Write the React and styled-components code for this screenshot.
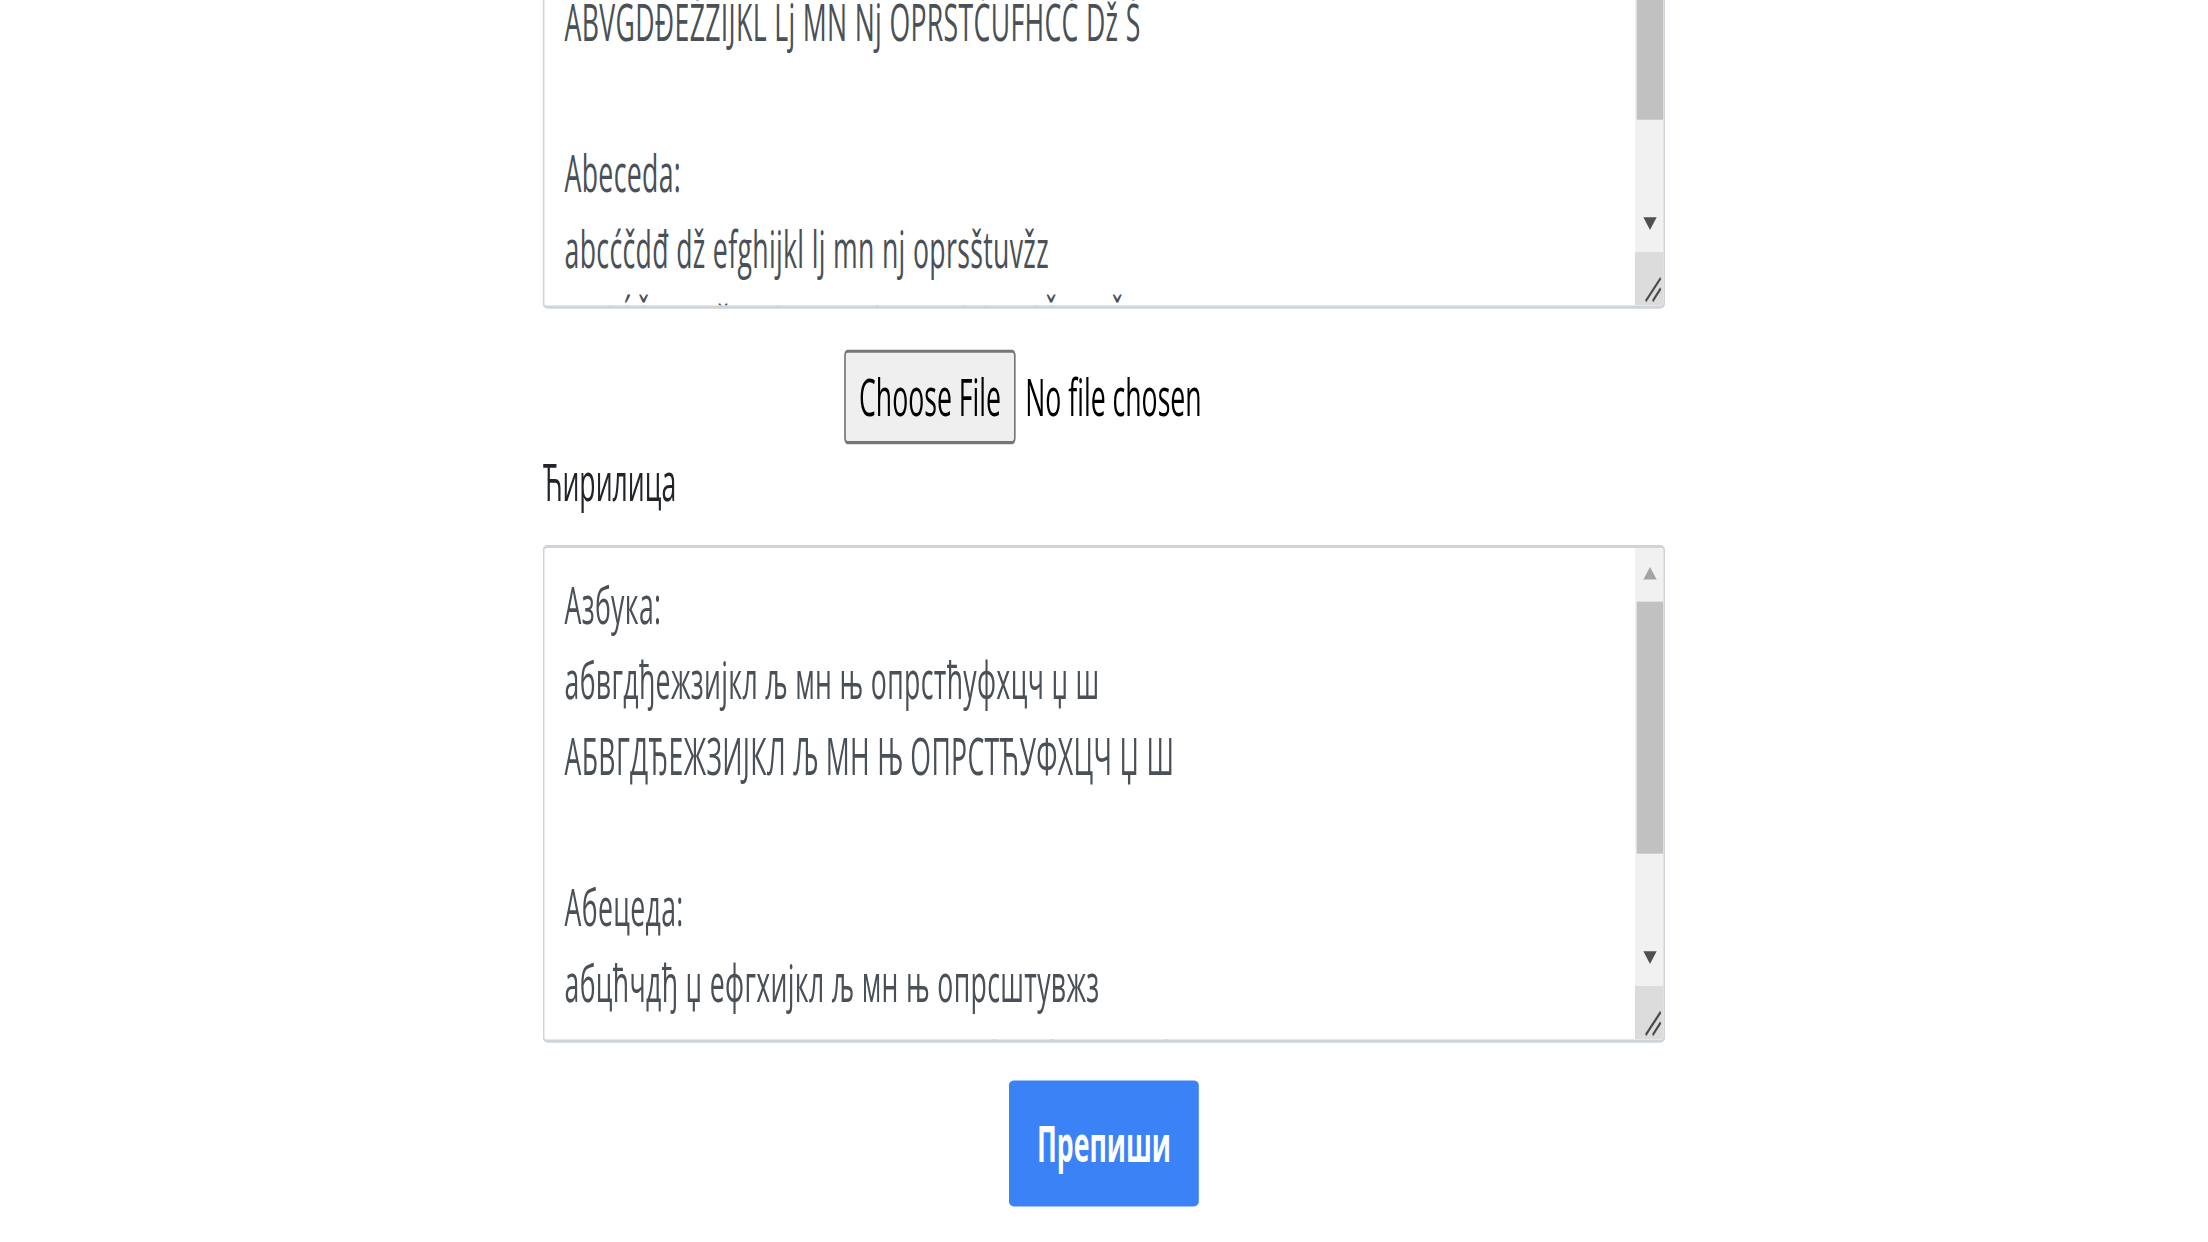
import React from 'react';
import styled, { createGlobalStyle } from 'styled-components';

const SX = 1.665;
const SY = 3.15;

const latin =
  'Azbuka:\nabvgdđežzijkl lj mn nj oprstćufhcč dž š\nABVGDĐEŽZIJKL Lj MN Nj OPRSTĆUFHCČ Dž Š\n\nAbeceda:\nabcćčdđ dž efghijkl lj mn nj oprsštuvžz\nABCĆČDĐ Dž EFGHIJKL Lj MN Nj OPRSŠTUVŽZ\n';
const cyrillic =
  'Азбука:\nабвгдђежзијкл љ мн њ опрстћуфхцч џ ш\nАБВГДЂЕЖЗИЈКЛ Љ МН Њ ОПРСТЋУФХЦЧ Џ Ш\n\nАбецеда:\nабцћчдђ џ ефгхијкл љ мн њ опрсштувжз\nАБЦЋЧДЂ Џ ЕФГХИЈКЛ Љ МН Њ ОПРСШТУВЖЗ\n';

const Global = createGlobalStyle`
  html, body { margin: 0; padding: 0; background: #fff; overflow: hidden; }
  #root { width: 2208px; height: 1242px; }
`;

const Viewport = styled.div`
  width: 2208px;
  height: 1242px;
  overflow: hidden;
  background: #fff;
`;

/* the whole page is shown stretched, as in the reference capture */
const Stage = styled.div`
  width: ${2208 / SX}px;
  height: ${1242 / SY}px;
  transform: scale(${SX}, ${SY});
  transform-origin: 0 0;
  display: flex;
  flex-direction: column;
  justify-content: flex-end;
  align-items: center;
  font-family: "Open Sans", "Noto Sans", "DejaVu Sans", sans-serif;
  font-size: 16px;
  line-height: 24px;
  color: #212529;
`;

const Form = styled.form`
  width: 674px;
  flex-shrink: 0;
  display: flex;
  flex-direction: column;
  padding-bottom: 11.1px;
  margin: 0;
`;

const Label = styled.label`
  display: block;
  margin-bottom: 8.4px;
  line-height: 24px;
  color: #212529;
`;

const Field = styled.div`
  box-sizing: border-box;
  height: 158px;
  display: flex;
  border: 1px solid #ced4da;
  border-radius: 3px / 1.5px;
  background: #fff;
  overflow: hidden;
`;

const Area = styled.textarea`
  flex: 1;
  min-width: 0;
  display: block;
  box-sizing: border-box;
  height: 100%;
  margin: 0;
  padding: 6px 12px;
  border: none;
  background: transparent;
  color: #495057;
  font: inherit;
  line-height: 24px;
  letter-spacing: 0.2px;
  resize: none;
  overflow: hidden;
  outline: none;
`;

const ScrollBar = styled.div`
  width: 17px;
  flex: none;
  display: flex;
  flex-direction: column;
  background: #f1f1f1;
`;

const ArrowButton = styled.div`
  height: 17px;
  flex: none;
  display: flex;
  align-items: center;
  justify-content: center;
`;

const Arrow = styled.span`
  width: 0;
  height: 0;
  border-left: 4px solid transparent;
  border-right: 4px solid transparent;
  ${(p) =>
    p.$up
      ? `border-bottom: 4px solid ${p.$disabled ? '#a3a3a3' : '#505050'};`
      : `border-top: 4px solid ${p.$disabled ? '#a3a3a3' : '#505050'};`}
`;

const Track = styled.div`
  flex: 1;
  display: flex;
  flex-direction: column;
  padding-left: 1px;
`;

const Thumb = styled.div`
  flex: none;
  background: #c1c1c1;
`;

const Resizer = styled.div`
  height: 17px;
  flex: none;
  background: #dcdcdc;
  display: flex;

  svg {
    width: 100%;
    height: 100%;
    display: block;
  }
`;

const FileRow = styled.div`
  margin-top: 12.7px;
  height: 30px;
  display: flex;
  justify-content: center;
`;

const FilePicker = styled.div`
  width: 312px;
  display: flex;
  align-items: center;
  gap: 5.7px;
`;

const ChooseButton = styled.button`
  box-sizing: border-box;
  width: 103px;
  height: 30px;
  padding: 0;
  background: #efefef;
  border: 1px solid #767676;
  border-radius: 2px;
  color: #000;
  font: inherit;
  white-space: nowrap;
`;

const NoFile = styled.span`
  color: #000;
  white-space: nowrap;
`;

const Submit = styled.button`
  align-self: center;
  box-sizing: border-box;
  margin-top: 12.3px;
  width: 114px;
  height: 40px;
  padding: 0;
  border: none;
  border-radius: 3px / 1.5px;
  background: #3b82f6;
  color: #fff;
  font: inherit;
  font-weight: 700;
`;

function TextField({ id, value, thumb }) {
  return (
    <Field>
      <Area id={id} rows={6} defaultValue={value} spellCheck={false} />
      <ScrollBar>
        <ArrowButton>
          <Arrow $up $disabled />
        </ArrowButton>
        <Track>
          <Thumb style={{ height: `${thumb * 100}%` }} />
        </Track>
        <ArrowButton>
          <Arrow />
        </ArrowButton>
        <Resizer>
          <svg viewBox="0 0 17 17" preserveAspectRatio="none">
            <line x1="6.4" y1="15.6" x2="15.4" y2="8.3" stroke="#4a4a4a" strokeWidth="1" />
            <line x1="10.6" y1="15.6" x2="15.4" y2="11.6" stroke="#4a4a4a" strokeWidth="1" />
          </svg>
        </Resizer>
      </ScrollBar>
    </Field>
  );
}

export default function App() {
  return (
    <Viewport>
      <Global />
      <Stage>
        <Form onSubmit={(e) => e.preventDefault()}>
          <Label htmlFor="lat">Латиница</Label>
          <TextField id="lat" value={latin} thumb={0.76} />
          <FileRow>
            <FilePicker>
              <ChooseButton type="button">Choose File</ChooseButton>
              <NoFile>No file chosen</NoFile>
            </FilePicker>
          </FileRow>
          <Label htmlFor="cyr">Ћирилица</Label>
          <TextField id="cyr" value={cyrillic} thumb={0.76} />
          <Submit type="submit">Препиши</Submit>
        </Form>
      </Stage>
    </Viewport>
  );
}
